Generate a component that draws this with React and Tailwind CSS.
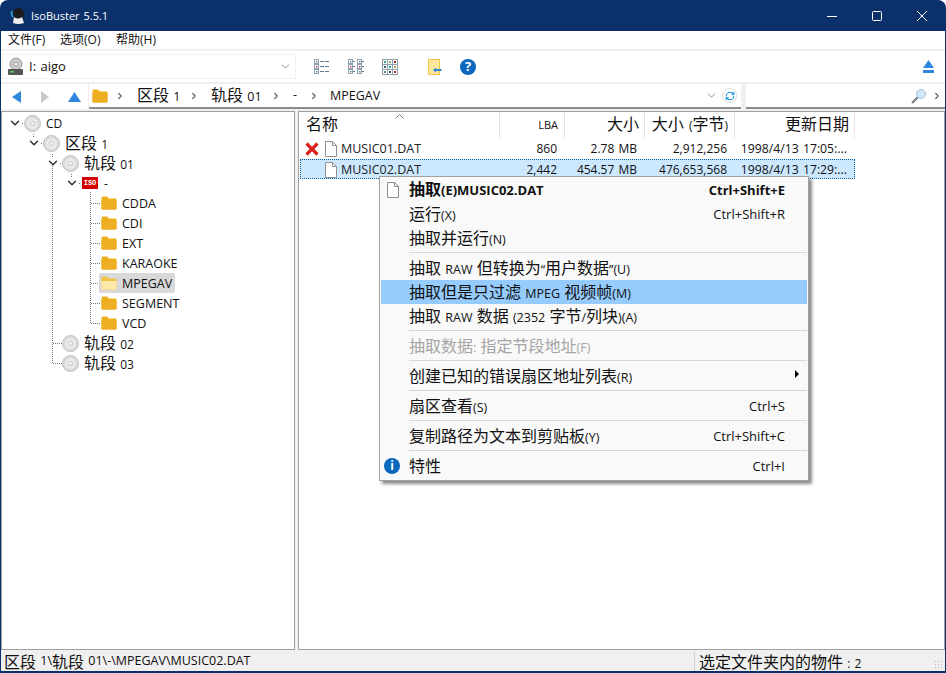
import { ChevronDown, ChevronRight, RefreshCw } from 'lucide-react'

// CJK glyphs are drawn larger than latin ones in the original
const Mix = ({ text, small = false }) => (
  <>
    {text.split(/([\u4e00-\u9fff]+)/).map((part, i) =>
      /[\u4e00-\u9fff]/.test(part) ? (
        <span key={i} className={small ? 'text-[12px]' : 'text-[16px]'}>{part}</span>
      ) : (
        <span key={i}>{part}</span>
      )
    )}
  </>
)

const Disc = () => (
  <svg width="17" height="17" viewBox="0 0 17 17" className="shrink-0">
    <circle cx="8.5" cy="8.5" r="8" fill="#d9dbd9" stroke="#c0c2c0" />
    <circle cx="8.5" cy="8.5" r="5.5" fill="#e9ebe9" />
    <circle cx="8.5" cy="8.5" r="2.6" fill="#cfd1cf" />
    <circle cx="8.5" cy="8.5" r="1.3" fill="#fff" />
  </svg>
)

const Folder = ({ open = false }) => (
  <svg width="16" height="14" viewBox="0 0 16 14" className="shrink-0">
    <path d="M0.5 2 Q0.5 0.5 2 0.5 H6 L8 2.5 H14.5 Q15.5 2.5 15.5 3.5 V12.5 Q15.5 13.5 14.5 13.5 H1.5 Q0.5 13.5 0.5 12.5 Z" fill={open ? '#f1c244' : '#f0b01c'} />
    {open ? (
      <path d="M0.5 5 H15.5 V12.5 Q15.5 13.5 14.5 13.5 H1.5 Q0.5 13.5 0.5 12.5 Z" fill="#fde9a8" />
    ) : (
      <path d="M0.5 4 H15.5 V12.5 Q15.5 13.5 14.5 13.5 H1.5 Q0.5 13.5 0.5 12.5 Z" fill="#eeae24" />
    )}
  </svg>
)

const FileIcon = () => (
  <svg width="13" height="16" viewBox="0 0 13 16" className="shrink-0">
    <path d="M1.5 0.5 H8.5 L12.5 4.5 V15.5 H1.5 Z" fill="#fff" stroke="#8f8f8f" />
    <path d="M8.5 0.5 V4.5 H12.5" fill="none" stroke="#8f8f8f" />
  </svg>
)

const Round = ({ ch, text = 'text-[12px]' }) => (
  <span className={`w-4 h-4 ${text} rounded-full bg-[#0a68bd] text-white font-bold flex items-center justify-center leading-none shrink-0`}>{ch}</span>
)

const ListIcon = () => (
  <svg width="16" height="15" viewBox="0 0 16 15" className="shrink-0">
    {[0, 5, 10].map((y) => (
      <g key={y}>
        <rect x="0.5" y={y + 0.5} width="4" height="4" fill="#fff" stroke="#8fa0b0" />
        <rect x="2" y={y + 2} width="1.4" height="1.4" fill={y === 5 ? '#c0392b' : '#5a7f8f'} />
        <path d={`M6 ${y + 2.5} h4 M11 ${y + 2.5} h4`} stroke="#5f7488" />
      </g>
    ))}
  </svg>
)

const ColumnsIcon = () => (
  <svg width="16" height="15" viewBox="0 0 16 15" className="shrink-0">
    {[0, 9].flatMap((x) =>
      [0, 5, 10].map((y) => (
        <g key={`${x}-${y}`}>
          <rect x={x + 0.5} y={y + 0.5} width="4" height="4" fill="#fff" stroke="#8fa0b0" />
          <rect x={x + 2} y={y + 2} width="1.4" height="1.4" fill={y === 5 ? '#c0392b' : '#5a7f8f'} />
          <path d={`M${x + 5} ${y + 2.5} h2`} stroke="#5f7488" />
        </g>
      ))
    )}
  </svg>
)

const GridIcon = () => (
  <svg width="16" height="16" viewBox="0 0 16 16" className="shrink-0">
    <rect x="0.5" y="0.5" width="15" height="15" fill="#fff" stroke="#8f9fad" />
    <path d="M5.5 0.5 V15.5 M10.5 0.5 V15.5 M0.5 5.5 H15.5 M0.5 10.5 H15.5" stroke="#8f9fad" />
    {[
      [2, 2, '#2aa58f'], [7, 2, '#8fb04a'], [12, 2, '#a8281e'],
      [2, 7, '#44556a'], [7, 7, '#2aa5a0'], [12, 7, '#a0a040'],
      [2, 12, '#5a8f6a'], [7, 12, '#44556a'], [12, 12, '#a8281e'],
    ].map(([x, y, c]) => (
      <rect key={`${x}-${y}`} x={x} y={y} width="2" height="2" fill={c} />
    ))}
  </svg>
)

const Sep = () => <ChevronRight size={10} strokeWidth={3} className="text-[#666] shrink-0" />

const crumbs = [
  { text: '区段 1', w: 'w-[41px]' },
  { text: '轨段 01', w: 'w-[49px]' },
  { text: '-', w: 'w-[5px]' },
]

const tree = [
  { label: 'CD', pad: 'pl-[8px]', kind: 'disc', arrow: true, latin: true },
  { label: '区段 1', pad: 'pl-[27px]', kind: 'disc', arrow: true },
  { label: '轨段 01', pad: 'pl-[46px]', kind: 'disc', arrow: true },
  { label: '-', pad: 'pl-[65px]', kind: 'iso', arrow: true, latin: true },
  { label: 'CDDA', kind: 'folder' },
  { label: 'CDI', kind: 'folder' },
  { label: 'EXT', kind: 'folder' },
  { label: 'KARAOKE', kind: 'folder' },
  { label: 'MPEGAV', kind: 'folder', active: true },
  { label: 'SEGMENT', kind: 'folder' },
  { label: 'VCD', kind: 'folder' },
  { label: '轨段 02', pad: 'pl-[46px]', kind: 'disc' },
  { label: '轨段 03', pad: 'pl-[46px]', kind: 'disc' },
]

const TreeRow = ({ row }) => {
  if (row.kind === 'folder') {
    return (
      <div className="h-5 flex items-center pl-[97px] text-[12.5px]">
        <div className={`h-5 flex items-center pl-[2px] pr-[3px] gap-[5px] rounded-[2px] ${row.active ? 'bg-[#d9d9d9]' : ''}`}>
          <Folder open={row.active} />
          <span className="translate-y-px">{row.label}</span>
        </div>
      </div>
    )
  }
  return (
    <div className={`h-5 flex items-center text-[12px] ${row.pad}`}>
      <span className="w-[10px] shrink-0 flex justify-center">
        {row.arrow && <ChevronDown size={14} strokeWidth={2.5} className="shrink-0 text-[#333]" />}
      </span>
      {row.kind === 'disc' ? (
        <span className="ml-[4px]"><Disc /></span>
      ) : (
        <span className="ml-[5px] w-4 h-[12px] bg-[#d40000] text-white text-[7px] font-bold leading-none flex items-center justify-center font-['Liberation_Mono',monospace]">ISO</span>
      )}
      <span className={`${row.kind === 'disc' ? 'ml-[5px]' : 'ml-[6px]'} ${row.latin ? 'translate-y-px' : ''}`}><Mix text={row.label} /></span>
    </div>
  )
}

const columns = [
  { w: 'w-[200px]', label: '名称', align: 'justify-start pl-[6px] text-[12px]' },
  { w: 'w-[65px]', label: 'LBA', align: 'justify-end pr-[6px] text-[11px]' },
  { w: 'w-[80px]', label: '大小', align: 'justify-end pr-[5px] text-[12px]' },
  { w: 'w-[90px]', label: '大小 (字节)', align: 'justify-end pr-[6px] text-[12px] [word-spacing:2px]' },
  { w: 'w-[120px]', label: '更新日期', align: 'justify-end pr-[5px] text-[12px]' },
]

const files = [
  { name: 'MUSIC01.DAT', lba: '860', size: '2.78 MB', bytes: '2,912,256', date: '1998/4/13 17:05:...', bad: true },
  { name: 'MUSIC02.DAT', lba: '2,442', size: '454.57 MB', bytes: '476,653,568', date: '1998/4/13 17:29:...', selected: true },
]

const menu = [
  { text: '抽取(E)MUSIC02.DAT', key: 'Ctrl+Shift+E', bold: true, icon: 'file' },
  { text: '运行(X)', key: 'Ctrl+Shift+R' },
  { text: '抽取并运行(N)' },
  { sep: true },
  { text: '抽取 RAW 但转换为“用户数据”(U)' },
  { text: '抽取但是只过滤 MPEG 视频帧(M)', active: true },
  { text: '抽取 RAW 数据 (2352 字节/列块)(A)' },
  { sep: true },
  { text: '抽取数据: 指定节段地址(F)', disabled: true },
  { sep: true },
  { text: '创建已知的错误扇区地址列表(R)', arrow: true },
  { sep: true },
  { text: '扇区查看(S)', key: 'Ctrl+S' },
  { sep: true },
  { text: '复制路径为文本到剪贴板(Y)', key: 'Ctrl+Shift+C' },
  { sep: true },
  { text: '特性', key: 'Ctrl+I', icon: 'info' },
]

const ContextMenu = () => (
  <div className="absolute left-[379px] top-[176px] w-[430px] h-[305px] bg-[#f9f9f9] border border-[#a0a0a0] p-[1px] shadow-[3px_3px_3px_rgba(0,0,0,0.45)] text-[12.5px] text-[#111] [word-spacing:1px]">
    {menu.map((item, i) =>
      item.sep ? (
        <div key={i} className="h-[6px] pl-[28px] pt-[2px]">
          <div className="h-px bg-[#d7d7d7]" />
        </div>
      ) : (
        <div key={i} className={`h-6 flex items-center ${item.active ? 'bg-[#96cbfd]' : ''} ${item.disabled ? 'text-[#a5a5a5]' : ''} ${item.bold ? 'font-bold text-[13px]' : ''}`}>
          <span className={`w-[28px] shrink-0 flex ${item.icon === 'info' ? 'pl-[3px]' : 'pl-[5px]'}`}>
            {item.icon === 'file' && <FileIcon />}
            {item.icon === 'info' && <Round ch="i" />}
          </span>
          <span className={`flex-1 ${item.bold ? '-translate-y-px' : ''}`}><Mix text={item.text} /></span>
          {item.key && <span className="pr-[22px] text-[13px]">{item.key}</span>}
          {item.arrow && <span className="mr-[8px] w-0 h-0 border-y-[4px] border-y-transparent border-l-[4px] border-l-black -translate-y-[2px]" />}
        </div>
      )
    )}
  </div>
)

const App = () => {
  return (
    <div className="relative w-[946px] h-[673px] overflow-hidden flex flex-col bg-[#0c3069] rounded-t-[8px] px-px pb-[2px] text-[#111] leading-none [word-spacing:1px] font-['Open_Sans','Noto_Sans_CJK_SC',sans-serif]">
      {/* title bar */}
      <div className="h-[31px] shrink-0 flex items-center text-white text-[11px]">
        <svg width="16" height="18" viewBox="0 0 16 18" className="ml-[9px] shrink-0">
          <path d="M3 7 Q3 1 9 1 Q14 2 14 8 L13 12 L5 11 Z" fill="#1a1a1a" />
          <path d="M2 4 Q1 8 3 10" stroke="#2a8fc0" strokeWidth="2" fill="none" />
          <path d="M4 10 Q8 13 12 10 L14 16 Q8 18 3 16 Z" fill="#eee" />
        </svg>
        <span className="ml-[5px]">IsoBuster 5.5.1</span>
        <div className="ml-auto flex items-center mr-[18px] gap-[35px]">
          <svg width="10" height="10" viewBox="0 0 10 10" stroke="#fff" fill="none"><path d="M0 5.5 H10" /></svg>
          <svg width="10" height="10" viewBox="0 0 10 10" stroke="#fff" fill="none"><rect x="0.5" y="0.5" width="9" height="9" rx="1" /></svg>
          <svg width="10" height="10" viewBox="0 0 10 10" stroke="#fff" fill="none"><path d="M0 0 L10 10 M10 0 L0 10" /></svg>
        </div>
      </div>

      {/* menu bar */}
      <div className="h-[18px] shrink-0 bg-white flex items-center pl-[7px] text-[12px]">
        <span className="w-[52px]"><Mix text="文件(F)" small /></span>
        <span className="w-[56px]"><Mix text="选项(O)" small /></span>
        <span><Mix text="帮助(H)" small /></span>
      </div>

      {/* toolbar */}
      <div className="h-[35px] shrink-0 bg-white border-y-2 border-[#f0f0f0] flex items-center pl-px">
        <div className="w-[294px] h-[25px] border border-[#f0f0f0] flex items-center pl-[4px] pr-[3px] text-[13px]">
          <svg width="17" height="19" viewBox="0 0 17 19" className="shrink-0">
            <circle cx="9" cy="7" r="6" fill="#c9cbc9" stroke="#9a9a9a" />
            <circle cx="9" cy="7" r="2" fill="#fff" stroke="#999" />
            <rect x="1" y="12" width="15" height="6" rx="1" fill="#555" />
            <rect x="3" y="14" width="4" height="1.5" fill="#5fd05f" />
          </svg>
          <span className="ml-[5px]">I: aigo</span>
          <ChevronDown size={13} strokeWidth={1.2} className="ml-auto text-[#555]" />
        </div>
        <div className="ml-[18px] flex items-center">
          <ListIcon />
          <span className="ml-[18px]"><ColumnsIcon /></span>
          <span className="ml-[18px]"><GridIcon /></span>
          <svg width="14" height="16" viewBox="0 0 14 16" className="ml-[30px] shrink-0">
            <rect x="0.5" y="0.5" width="11" height="15" fill="#fde79a" stroke="#f0c648" />
            <path d="M5 11 L8 8.5 V10 H13.5 V12 H8 V13.5 Z" fill="#2f86cf" />
          </svg>
          <span className="ml-[18px]"><Round ch="?" text="text-[13px]" /></span>
        </div>
        <svg width="11" height="14" viewBox="0 0 11 14" className="ml-auto mr-[11px] shrink-0">
          <path d="M5.5 0 L11 8 H0 Z" fill="#2f88dd" />
          <rect x="0" y="10" width="11" height="3" fill="#2f88dd" />
        </svg>
      </div>

      {/* address bar */}
      <div className="h-[25px] shrink-0 bg-white flex items-stretch">
        <div className="w-[87px] shrink-0 flex items-center pl-[11px]">
          <svg width="10" height="12" viewBox="0 0 10 12"><path d="M9 0 V12 L0 6 Z" fill="#2f88dd" /></svg>
          <svg width="9" height="12" viewBox="0 0 9 12" className="ml-[19px]"><path d="M0 0 V12 L8 6 Z" fill="#c9c9c9" /></svg>
          <svg width="13" height="10" viewBox="0 0 13 10" className="ml-[18px]"><path d="M6.5 0 L13 10 H0 Z" fill="#2f88dd" /></svg>
        </div>
        <div className="w-[653px] flex items-center border-b-2 border-[#8c8c8c] rounded-bl-[3px] border-l border-l-[#efefef] pl-[3px] text-[12.5px]">
          <Folder />
          <span className="ml-[7px]"><Sep /></span>
          {crumbs.map((c) => (
            <div key={c.text} className="flex items-center">
              <span className={`whitespace-nowrap ml-[12px] ${c.w}`}><Mix text={c.text} /></span>
              <span className="ml-[11px]"><Sep /></span>
            </div>
          ))}
          <span className="ml-[11px] translate-y-px">MPEGAV</span>
          <ChevronDown size={13} strokeWidth={1.2} className="ml-auto text-[#555]" />
          <span className="ml-[4px] mr-[4px] w-[15px] h-[15px] rounded-full border border-[#dcdcdc] flex items-center justify-center">
            <RefreshCw size={10} strokeWidth={2.5} className="text-[#1f8fe0]" />
          </span>
        </div>
        <div className="w-[5px] bg-[#f0f0f0]" />
        <div className="flex-1 flex items-center justify-end border-b-2 border-[#8c8c8c] pr-[3px]">
          <svg width="16" height="16" viewBox="0 0 16 16" className="shrink-0">
            <path d="M7 9 L1 15" stroke="#777" strokeWidth="2" />
            <circle cx="10" cy="6" r="4.5" fill="#cfe8fb" stroke="#a8c0d0" />
          </svg>
          <span className="ml-[5px]"><Sep /></span>
        </div>
      </div>

      {/* panes */}
      <div className="flex-1 min-h-0 bg-[#f0f0f0] flex pt-[2px]">
        <div className="relative w-[294px] shrink-0 bg-white border border-[#a0a0a0] pt-[1px]">
          <svg width="120" height="270" viewBox="0 0 120 270" className="absolute left-0 top-0" fill="none" stroke="#777" strokeDasharray="1 1">
            <path d="M50.5 52 V251.5 H60 M51 231.5 H60" />
            <path d="M88.5 80 V211.5 M89 91.5 H99 M89 111.5 H99 M89 131.5 H99 M89 151.5 H99 M89 171.5 H99 M89 191.5 H99 M89 211.5 H99" />
            <path d="M20 11.5 H22 M39 31.5 H41 M58 51.5 H60 M77 71.5 H79 M31.5 22 V25 M50.5 42 V45 M69.5 62 V65" />
          </svg>
          <div className="relative">
            {tree.map((row) => (
              <TreeRow key={row.label} row={row} />
            ))}
          </div>
        </div>
        <div className="w-[3px] shrink-0" />
        <div className="relative flex-1 bg-white border border-[#a0a0a0] pl-px">
          <div className="h-[26px] flex">
            {columns.map((c) => (
              <div key={c.label} className={`${c.w} flex items-center border-r border-[#e5e5e5] ${c.align}`}>
                <span className="-translate-y-px"><Mix text={c.label} /></span>
              </div>
            ))}
          </div>
          <svg width="9" height="5" viewBox="0 0 9 5" className="absolute left-[96px] top-[2px]" fill="none" stroke="#777"><path d="M0.5 4.5 L4.5 0.5 L8.5 4.5" /></svg>
          <div className="pt-[1px] text-[12px]">
            {files.map((f) => (
              <div key={f.name} className={`w-[555px] h-5 flex items-center ${f.selected ? 'bg-[#cce8ff] border border-dotted border-[#0a5ca8] pt-[2px]' : 'border border-transparent'}`}>
                <span className="w-[199px] flex items-center pl-[4px]">
                  <span className="w-[15px] shrink-0">
                    {f.bad && (
                      <svg width="14" height="14" viewBox="0 0 14 14" fill="none" stroke="#d9231c" strokeWidth="3.2">
                        <path d="M1.5 1.5 L12.5 12.5 M12.5 1.5 L1.5 12.5" />
                      </svg>
                    )}
                  </span>
                  <span className="ml-[4px]"><FileIcon /></span>
                  <span className="ml-[4px] text-[#222] text-[12.5px]">{f.name}</span>
                </span>
                <span className="w-[65px] text-right pr-[8px]">{f.lba}</span>
                <span className="w-[80px] text-right pr-[8px]">{f.size}</span>
                <span className="w-[90px] text-right pr-[8px]">{f.bytes}</span>
                <span className="w-[119px] text-right pr-[7px] whitespace-nowrap text-[12.25px]">{f.date}</span>
              </div>
            ))}
          </div>
        </div>
      </div>

      {/* status bar */}
      <div className="relative h-[21px] shrink-0 bg-[#f0f0f0] flex items-center text-[12.5px] pt-[2px]">
        <span className="w-[693px] pl-[3px] h-full flex items-center whitespace-pre"><Mix text="区段 1\轨段 01\-\MPEGAV\MUSIC02.DAT" /></span>
        <span className="h-full border-l border-[#d0d0d0]" />
        <span className="pl-[4px] text-[12px]"><Mix text="选定文件夹内的物件 : 2" /></span>
        <div className="absolute right-[1px] bottom-[1px] w-[10px] h-[10px] bg-[radial-gradient(#b5b5b5_1px,transparent_1px)] bg-[length:3px_3px]" />
      </div>

      <ContextMenu />
    </div>
  )
}

export default App
